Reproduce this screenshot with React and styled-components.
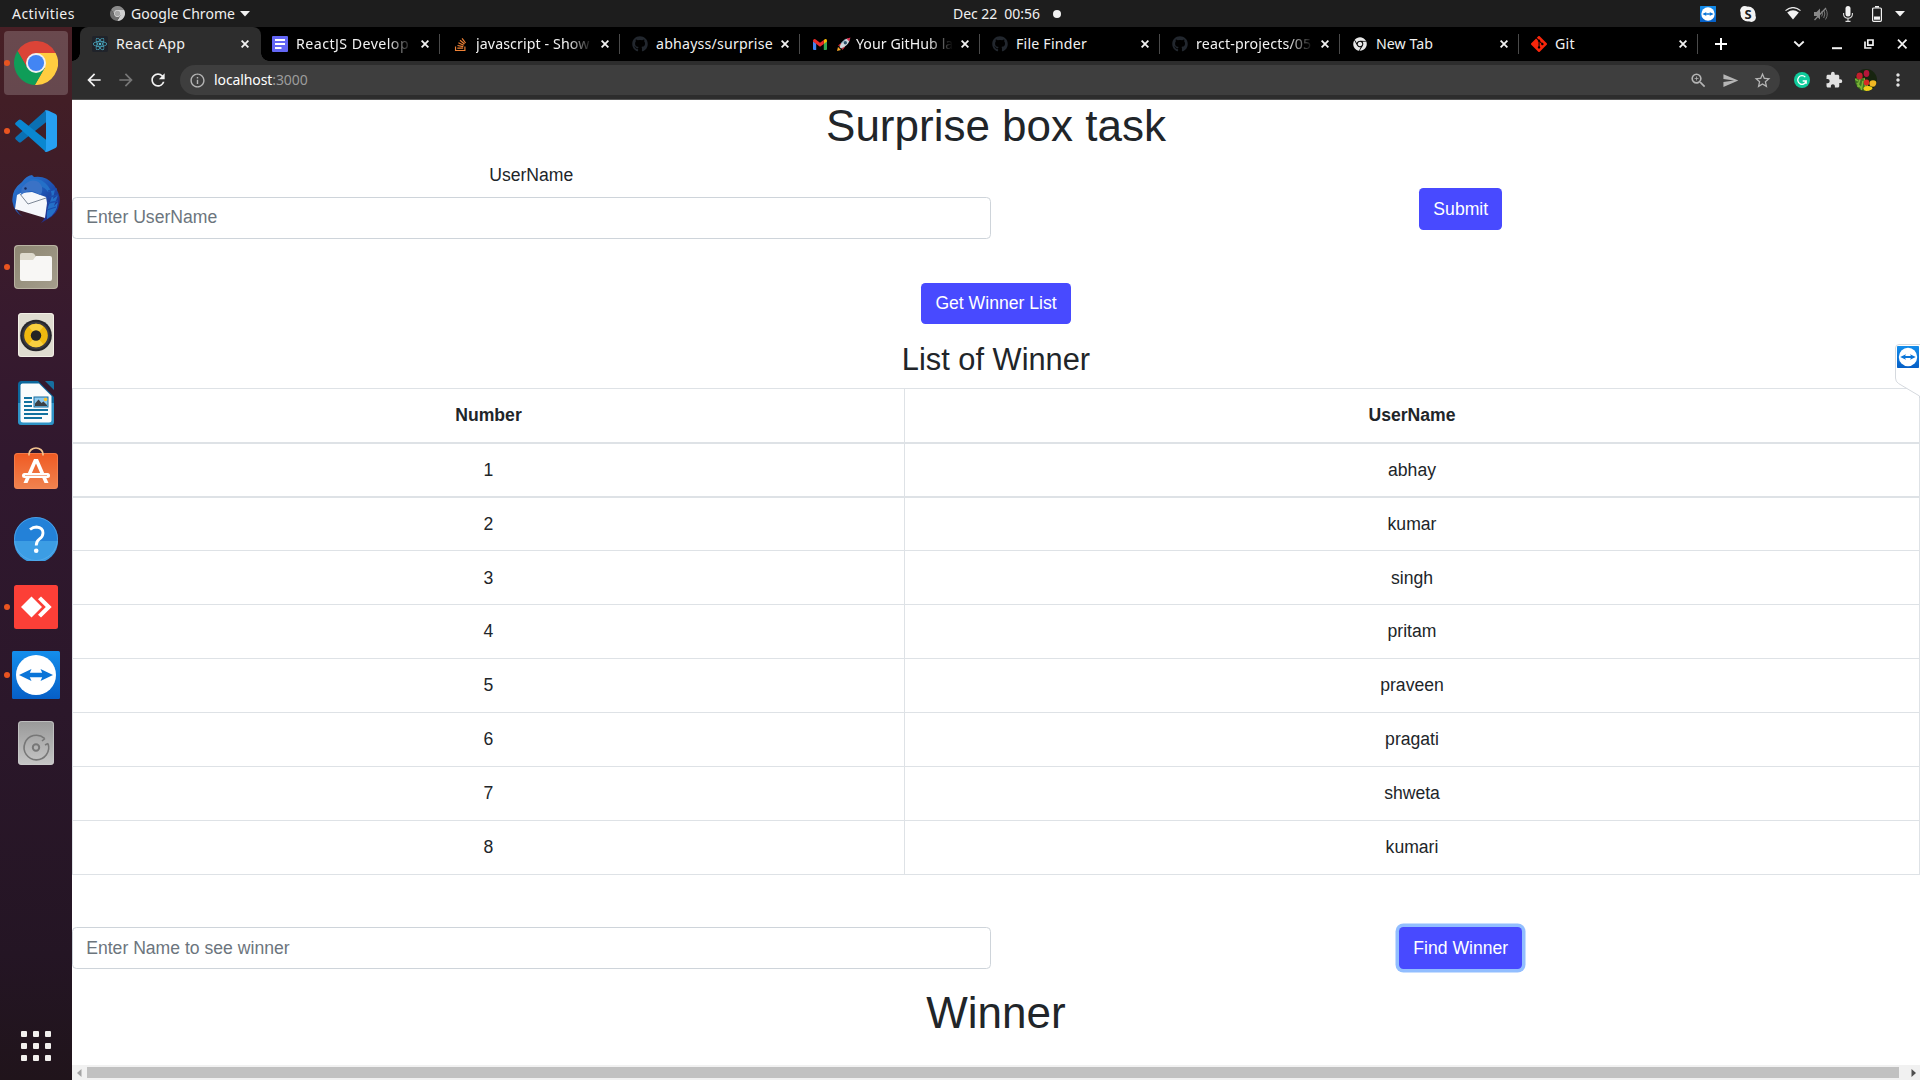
import React from 'react';
import styled, { createGlobalStyle } from 'styled-components';
import { FaReact, FaGithub, FaStackOverflow, FaChrome } from 'react-icons/fa';
import { SiGit } from 'react-icons/si';
import {
  MdArrowBack, MdArrowForward, MdRefresh, MdInfoOutline, MdZoomIn, MdSend, MdStarBorder,
  MdExtension, MdMoreVert,
} from 'react-icons/md';

const GlobalStyle = createGlobalStyle`
  * { box-sizing: border-box; }
  body { margin: 0; background: #fff; overflow: hidden; }
  svg { display: block; flex: none; }
`;

const shellFont = `'Noto Sans', 'Open Sans', sans-serif`;
const pageFont = `'Liberation Sans', Arial, sans-serif`;

const Desktop = styled.div`
  width: 1920px;
  height: 1080px;
  display: flex;
  flex-direction: column;
  overflow: hidden;
`;

/* ---------- system bar ---------- */
const SystemBar = styled.header`
  height: 27px;
  background: #1d1d1d;
  color: #f0f0f0;
  display: grid;
  grid-template-columns: 953px 1fr auto;
  align-items: center;
  font: 14px/27px ${shellFont};
  white-space: pre;
`;
const SystemLeft = styled.div`
  display: flex;
  align-items: center;
  padding-left: 12px;
`;
const Activities = styled.span`
  width: 98px;
  letter-spacing: 0.45px;
`;
const AppMenu = styled.span`
  margin: 0 5px 0 6px;
  letter-spacing: 0.05px;
`;
const Clock = styled.div`
  display: flex;
  align-items: center;
  gap: 13px;
  line-height: 25px;
  letter-spacing: -0.05px;
`;
const NoticeDot = styled.i`
  width: 8px;
  height: 8px;
  border-radius: 50%;
  background: #f2f2f2;
`;
const Tray = styled.div`
  display: flex;
  align-items: center;
  padding-right: 15px;
  height: 26px;
`;
const TrayItem = styled.span`
  margin-left: ${p => p.$gap}px;
`;

/* ---------- dock ---------- */
const Workspace = styled.div`
  flex: 1;
  min-height: 0;
  display: grid;
  grid-template-columns: 72px 1848px;
`;
const Dock = styled.nav`
  background: linear-gradient(180deg, #481f25 0%, #421e26 7%, #371a2e 28%, #30182e 42%, #2b172a 65%, #241524 88%, #20141b 100%);
  display: flex;
  flex-direction: column;
  align-items: center;
  padding-top: 4px;
`;
const DockItem = styled.div`
  width: 64px;
  height: 64px;
  margin-bottom: 4px;
  border-radius: 4px;
  display: grid;
  place-items: center;
  position: relative;
  background: ${p => (p.$active ? 'rgba(255,255,255,.19)' : 'transparent')};
  &::before {
    content: '';
    display: ${p => (p.$running ? 'block' : 'none')};
    position: absolute;
    left: 0;
    top: 29px;
    width: 6px;
    height: 6px;
    border-radius: 50%;
    background: #e95420;
  }
`;
const AppGrid = styled.div`
  margin-top: auto;
  margin-bottom: 19px;
  display: grid;
  grid-template-columns: repeat(3, 6px);
  grid-auto-rows: 6px;
  gap: 6px;
`;
const AppGridDot = styled.i`
  background: #f2f0ee;
  border-radius: 1px;
`;

/* ---------- browser ---------- */
const Browser = styled.div`
  display: flex;
  flex-direction: column;
  min-height: 0;
`;
const TabStrip = styled.div`
  height: 34px;
  background: #000;
  display: flex;
  align-items: stretch;
  padding-left: 8px;
  font: 14.2px/34px ${shellFont};
  color: #f1f1f1;
`;
const Tab = styled.div`
  width: ${p => p.$w || 180}px;
  margin-right: ${p => (p.$active ? -1 : 0)}px;
  display: flex;
  align-items: center;
  padding: 0 ${p => (p.$active ? 7 : 6)}px 0 12px;
  background: ${p => (p.$active ? '#2d2d2d' : 'transparent')};
  border-radius: 8px 8px 0 0;
  position: relative;
  &::before, &::after {
    content: '';
    display: ${p => (p.$active ? 'block' : 'none')};
    position: absolute;
    bottom: 0;
    width: 8px;
    height: 8px;
  }
  &::before { left: -8px; background: radial-gradient(circle at 0 0, #000 7.5px, #2d2d2d 8px); }
  &::after { right: -8px; background: radial-gradient(circle at 100% 0, #000 7.5px, #2d2d2d 8px); }
`;
const Favicon = styled.span`
  width: 16px;
  height: 16px;
  display: grid;
  place-items: center;
  margin-right: 8px;
  flex: none;
`;
const TabTitle = styled.span`
  flex: 1;
  display: flex;
  align-items: center;
  gap: 5px;
  white-space: nowrap;
  letter-spacing: ${p => p.$track}px;
  -webkit-mask-image: ${p => (p.$fade ? 'linear-gradient(90deg,#000 78%,transparent 99%)' : 'none')};
`;
const TabClose = styled.span`
  width: 16px;
  height: 16px;
  display: grid;
  place-items: center;
  margin-left: 3px;
`;
const TabRule = styled.i`
  width: 1px;
  height: 20px;
  margin-left: 6px;
  margin-right: -6px;
  background: ${p => (p.$hidden ? 'transparent' : '#4a4a4a')};
`;
const WindowButtons = styled.div`
  flex: 1;
  display: flex;
  align-items: center;
  justify-content: space-between;
  padding: 0 12px 0 17px;
`;
const WindowGroup = styled.div`
  display: flex;
  align-items: center;
`;
const WindowButton = styled.span`
  margin-left: ${p => p.$gap}px;
`;
const Toolbar = styled.div`
  height: 39px;
  background: #2d2d2d;
  border-bottom: 1px solid #555;
  display: flex;
  align-items: center;
  padding-left: 12px;
`;
const NavButtons = styled.div`
  display: flex;
  gap: 12px;
  width: 96px;
`;
const Omnibox = styled.div`
  flex: none;
  width: 1600px;
  height: 30px;
  border-radius: 15px;
  background: #3e3e3e;
  display: flex;
  align-items: center;
  padding: 0 8px 0 9px;
  font: 14px/30px ${shellFont};
  color: #9c9c9c;
`;
const Url = styled.span`
  flex: 1;
  margin-left: 8px;
  letter-spacing: -0.1px;
  b { font-weight: 400; color: #fff; }
`;
const OmniActions = styled.div`
  display: grid;
  grid-template-columns: repeat(3, 32px);
  place-items: center;
  margin-right: -6px;
`;
const Extensions = styled.div`
  flex: none;
  display: grid;
  grid-template-columns: repeat(4, 32px);
  place-items: center;
  padding-left: 6px;
`;

/* ---------- page ---------- */
const Page = styled.main`
  flex: 1;
  min-height: 0;
  background: #fff;
  color: #212529;
  font: 17.6px/26.4px ${pageFont};
  text-align: center;
  position: relative;
  overflow: hidden;
`;
const Heading = styled.h1`
  margin: 0 0 8.8px;
  font-size: 44px;
  line-height: 52.8px;
  font-weight: 500;
`;
const SubHeading = styled.h3`
  margin: 16.6px 0 9.8px;
  font-size: 30.8px;
  line-height: 37px;
  font-weight: 500;
`;
const FormRow = styled.div`
  display: grid;
  grid-template-columns: 1fr 1fr;
  column-gap: 11px;
  align-items: center;
`;
const FormAction = styled.div`
  padding-top: ${p => p.$drop || 0}px;
`;
const Label = styled.label`
  display: block;
  margin-bottom: 8.8px;
`;
const Input = styled.input`
  display: block;
  width: 100%;
  height: 41.8px;
  padding: 6.6px 13.2px;
  border: 1px solid #ced4da;
  border-radius: 4.4px;
  font: 17.6px/26.4px ${pageFont};
  &::placeholder { color: #6c757d; opacity: 1; }
`;
const Button = styled.button`
  display: inline-block;
  vertical-align: top;
  height: 41.8px;
  padding: 0 14.3px;
  border: 0;
  border-radius: 4.4px;
  background: #484aff;
  color: #fff;
  font: 17.6px/26.4px ${pageFont};
  box-shadow: ${p => (p.$focused ? '0 0 0 3.5px #92beff' : 'none')};
`;
const WinnerAction = styled.div`
  margin-top: 44px;
  height: 41.8px;
`;
const Table = styled.div`
  border: 1px solid #dee2e6;
  margin-bottom: 52.6px;
`;
const Row = styled.div`
  display: grid;
  grid-template-columns: 831px 1fr;
  height: ${p => p.$h}px;
  line-height: ${p => p.$line}px;
  border-bottom: ${p => p.$rule}px solid #dee2e6;
  font-weight: ${p => (p.$head ? 700 : 400)};
`;
const Cell = styled.div`
  & + & { border-left: 1px solid #dee2e6; }
`;
const Bottom = styled.div`
  margin-bottom: 17.6px;
`;
const SideHandle = styled.div`
  position: absolute;
  right: 0;
  top: 244px;
`;
const Scrollbar = styled.div`
  height: 15px;
  background: #f1f1f1;
  display: flex;
  align-items: center;
  padding: 0 4px 0 5px;
`;
const Thumb = styled.div`
  width: 1812px;
  height: 11px;
  margin: 0 12px 0 5px;
  background: #c1c1c1;
`;

/* ---------- drawings ---------- */
const Cross = () => (
  <svg width="8" height="8" viewBox="0 0 8 8"><path d="M.6.6 7.4 7.4M7.4.6.6 7.4" stroke="#f2f2f2" strokeWidth="1.8" /></svg>
);

const ChromeLogo = ({ size, mono }) => {
  const c = mono ? ['#8a8a8a', '#d0d0d0', '#6d6d6d', '#a5a5a5', '#ddd'] : ['#db4437', '#ffcd40', '#0f9d58', '#4285f4', '#f1f1f1'];
  return (
    <svg width={size} height={size} viewBox="2 2 44 44">
      <path d="M5.54 12.03A22 22 0 0 1 43.6 14H24L15.34 29Z" fill={c[0]} />
      <path d="M43.6 14A22 22 0 0 1 22.86 45.97L32.66 29 24 14Z" fill={c[1]} />
      <path d="M22.86 45.97A22 22 0 0 1 5.54 12.03L15.34 29H32.66Z" fill={c[2]} />
      <circle cx="24" cy="24" r="10" fill={c[4]} />
      <circle cx="24" cy="24" r="8.1" fill={c[3]} />
    </svg>
  );
};

const TeamViewer = ({ size }) => (
  <svg width={size} height={size} viewBox="0 0 48 48">
    <defs><linearGradient id={`tv${size}`} x1="0" y1="0" x2="0" y2="1"><stop stopColor="#148eec" /><stop offset="1" stopColor="#065fc6" /></linearGradient></defs>
    <rect width="48" height="48" rx="1.5" fill={`url(#tv${size})`} />
    <circle cx="24" cy="24" r="20" fill="#fff" />
    <path d="M7 24 19.5 18 17.8 21.8H30.2L28.5 18 41 24 28.5 30 30.2 26.2H17.8L19.5 30Z" fill="#0b75d8" />
  </svg>
);

const VsCode = () => (
  <svg width="42" height="42" viewBox="0 0 42 42">
    <path d="M31 0 .8 27Q-.5 28.3.8 29.5L3.6 32Q4.800 33 6.200 32L31 12.200Z" fill="#0b70b3" />
    <path d="M31 42 .8 15Q-.5 13.700.8 12.500L3.600 10Q4.800 9 6.200 10L31 29.800Z" fill="#0a87d1" />
    <path d="M31 .2Q32 0 33 .4L40.500 4Q42 4.800 42 6.500V35.500Q42 37.200 40.500 38L33 41.600Q31 42.400 29.500 41 31 41.500 31 39V3Q31 .5 29.500 1Z" fill="#26a0f2" />
  </svg>
);

const Thunderbird = () => (
  <svg width="48" height="48" viewBox="0 0 48 48">
    <defs><linearGradient id="tb" x1="0" y1="0" x2="1" y2="1"><stop stopColor="#2f7fd6" /><stop offset=".5" stopColor="#1d54b4" /><stop offset="1" stopColor="#251a72" /></linearGradient></defs>
    <path d="M10 7Q14 1 20 0L22 2Q34 0 42 10 49 20 47.500 28 46 40 34 45L29 48Q33 44 33 39L4 34Q7 39 11 42 2 37 .5 27-1 15 10 7Z" fill="url(#tb)" />
    <path d="M10 18Q10 8 19 4 29 2 36 11 42 18 38 27 34 35 35 44 45 39 46 27L42 31 46 20 41 24 43 14 36 17Q32 11 26 12Z" fill="#2470c8" />
    <path d="M5 20 9 18 20 17 34 22 35 28 33 43 3 34Z" fill="#f5f7fb" />
    <path d="M8 19 16 29 34 23" fill="none" stroke="#7c8796" strokeWidth="1" />
    <path d="M9 20Q8 10 18 6 27 4 30 12 31 18 28 20 24 17 20 16 14 16 9 20Z" fill="#3a72c6" />
    <path d="M36 16 45 14M37 22 46 20M36 28 46 26M35 35 44 32" stroke="#1b4fae" strokeWidth="1.3" />
    <circle cx="13.500" cy="13.500" r="1.200" fill="#152b60" />
  </svg>
);

const Files = () => (
  <svg width="44" height="44" viewBox="0 0 44 44">
    <defs><linearGradient id="fl" x1="0" y1="0" x2="1" y2="1"><stop stopColor="#8d8672" /><stop offset="1" stopColor="#a49d8c" /></linearGradient></defs>
    <rect width="44" height="44" rx="4" fill="#b9b3a2" />
    <rect x="1" y="1" width="42" height="42" rx="3.500" fill="url(#fl)" />
    <path d="M6 10Q6 8 8 8H18Q20 8 21 10L22 12H30V20H6Z" fill="#dedacd" />
    <path d="M6 15H19L22 11H36Q38 11 38 13V34Q38 36 36 36H8Q6 36 6 34Z" fill="#f8f7f5" />
  </svg>
);

const Rhythmbox = () => (
  <svg width="36" height="44" viewBox="0 0 36 44">
    <rect width="36" height="44" rx="3.500" fill="#dfdcd0" />
    <rect x=".5" y=".5" width="35" height="43" rx="3" fill="none" stroke="#f2efe6" />
    <circle cx="18" cy="22.500" r="15.800" fill="#26262b" />
    <circle cx="18" cy="22.500" r="13.800" fill="#3a3a40" />
    <circle cx="18" cy="22.500" r="11.800" fill="#f0b90f" />
    <path d="M18 22.500 10.500 13.500A11.800 11.800 0 0 1 25.500 13.500Z" fill="#f8d040" />
    <path d="M18 22.500 10.500 31.500A11.800 11.800 0 0 0 25.500 31.500Z" fill="#f8d040" />
    <circle cx="18" cy="22.500" r="5.200" fill="#242424" />
  </svg>
);

const Writer = () => (
  <svg width="36" height="44" viewBox="0 0 36 44">
    <path d="M3.500 0H20L36 16V40.500Q36 44 32.500 44H3.500Q0 44 0 40.500V3.500Q0 0 3.500 0Z" fill="#0c679c" />
    <path d="M0 22H36V40.500Q36 44 32.500 44H3.500Q0 44 0 40.500Z" fill="#2f93c6" />
    <path d="M27 0H34.500Q36 0 36 1.500V9Z" fill="#176f9f" />
    <path d="M4.500 2.500H21L33.500 15V39Q33.500 41.500 31 41.500H5Q2.500 41.500 2.500 39V4.500Q2.500 2.500 4.500 2.500Z" fill="#fafbfc" />
    <path d="M6 17H14M6 21H14M6 25H14M6 29H30M6 33H30M6 37H24" stroke="#12719f" strokeWidth="1.900" />
    <rect x="16" y="16" width="14" height="10" fill="#8cc8ee" stroke="#176f9f" strokeWidth="1" />
    <circle cx="27.500" cy="18.500" r="1.800" fill="#f7c12d" />
    <path d="M17 25V22.500L20.500 18.500 23.500 22 25.500 20.500 29 24V25Z" fill="#3b4045" />
  </svg>
);

const Software = () => (
  <svg width="44" height="48" viewBox="0 2 44 48">
    <defs><linearGradient id="sw" x1="0" y1="0" x2="0" y2="1"><stop stopColor="#f05a22" /><stop offset="1" stopColor="#f08350" /></linearGradient></defs>
    <rect y="8" width="44" height="36" rx="3.500" fill="url(#sw)" />
    <rect x=".5" y="8.500" width="43" height="35" rx="3" fill="none" stroke="#f58b5c" strokeOpacity=".6" />
    <path d="M15 10.500V9A7 6 0 0 1 29 9V10.500" fill="none" stroke="#f3c48e" strokeWidth="1.700" />
    <path d="M20 14H24L34.500 38H30.500L22 18.500 13.500 38H9.500Z" fill="#fff" />
    <rect x="8" y="28" width="28" height="5" rx="2.500" fill="#fff" />
    <path d="M11 30.500H33" stroke="#f3a481" strokeWidth=".9" />
  </svg>
);

const Help = () => (
  <svg width="44" height="44" viewBox="0 0 44 44">
    <circle cx="22" cy="22" r="22" fill="#2381d8" />
    <path d="M0 24H44A22 22 0 0 1 0 24Z" fill="#3c9de4" />
    <circle cx="22" cy="22" r="21.500" fill="none" stroke="#62b3ee" strokeOpacity=".6" />
    <path d="M16 12.500Q19 10 22.500 10 29 10.500 29 16 29 19.500 25.300 22.200 22.300 24.300 22.200 28.500" fill="none" stroke="#fff" strokeWidth="2.800" />
    <circle cx="22.200" cy="33.800" r="2.300" fill="#fff" />
  </svg>
);

const AnyDesk = () => (
  <svg width="44" height="44" viewBox="0 0 44 44">
    <rect width="44" height="44" rx="2.500" fill="#fc3f37" />
    <path d="M7 22 17.500 11.500 28 22 17.500 32.500Z" fill="#fff" />
    <path d="M24 14.200 27 11.500 37.700 22 27 32.500 24 29.800 31.800 22Z" fill="#fff" />
  </svg>
);

const Disk = () => (
  <svg width="36" height="44" viewBox="0 0 36 44">
    <defs><linearGradient id="dk" x1="0" y1="0" x2="0" y2="1"><stop stopColor="#999" /><stop offset="1" stopColor="#c6c6c6" /></linearGradient></defs>
    <rect width="36" height="44" rx="3.500" fill="url(#dk)" />
    <rect x=".5" y=".5" width="35" height="43" rx="3" fill="none" stroke="#ccc" strokeOpacity=".7" />
    <path d="M26.500 17.300A12.300 12.300 0 1 0 30 22.500M27 17.500 24 20M30 22.500 27 24" fill="none" stroke="#777" strokeWidth="1.600" />
    <circle cx="18" cy="26.500" r="3.200" fill="none" stroke="#777" strokeWidth="2" />
  </svg>
);

const DocIcon = () => (
  <svg width="16" height="16" viewBox="0 0 16 16"><rect width="16" height="16" rx="1" fill="#6366f5" /><path d="M3 4H13M3 8H13M3 12H9.500" stroke="#fff" strokeWidth="2" /></svg>
);
const ReactIcon = () => (
  <svg width="16" height="16" viewBox="0 0 16 16"><rect width="16" height="16" rx="1.500" fill="#20232a" /><FaReact x="1" y="1" size={14} color="#4fb9d3" /></svg>
);
const Gmail = () => (
  <svg width="14" height="11" viewBox="0 0 14 11">
    <path d="M0 2V10Q0 11 1 11H3.200V4.500Z" fill="#4285f4" />
    <path d="M14 2V10Q14 11 13 11H10.800V4.500Z" fill="#34a853" />
    <path d="M10.800 1.500V5L14 2.600V1.500Q13.500-.6 11.600.3Z" fill="#fbbc04" />
    <path d="M0 1.600Q.5-.6 2.400.3L7 3.700 10.800.9V5L7 7.700 0 2.600Z" fill="#ea2b2b" />
  </svg>
);
const Rocket = () => (
  <svg width="15" height="15" viewBox="0 0 15 15">
    <path d="M1 14 2 10 5 13Z" fill="#f9a825" />
    <path d="M2 8.500 5 6H8L5 10ZM6.500 13 9 10V7L5 10Z" fill="#c62835" />
    <path d="M3.500 10Q6 3 11.500 1.500L13.500 3.500Q12 9 5 11.500Z" fill="#cfd8dc" />
    <path d="M10.500 1.800 14.500.5 13.200 4.500Z" fill="#d9304f" />
    <circle cx="9.300" cy="5.700" r="1.700" fill="#31536b" />
    <path d="M5 6.500 9.500 2.300" stroke="#8fb2c6" strokeWidth="1" />
  </svg>
);

const SkypeText = styled.text`
  font: 700 13px 'Noto Sans', sans-serif;
`;
const Skype = () => (
  <svg width="16" height="16" viewBox="0 0 16 16">
    <circle cx="8" cy="8" r="7.500" fill="#f2f2f2" /><circle cx="4.600" cy="4.600" r="4.500" fill="#f2f2f2" /><circle cx="11.400" cy="11.400" r="4.500" fill="#f2f2f2" />
    <SkypeText x="8" y="12.600" textAnchor="middle" fill="#1d1d1d">S</SkypeText>
  </svg>
);
const Wifi = () => (
  <svg width="16" height="13" viewBox="0 0 16 13"><path d="M.5 3.600Q8-2.500 15.500 3.600" fill="none" stroke="#e6e6e6" strokeWidth="1.200" /><path d="M2.200 5.400Q8 1 13.800 5.400L8 12.500Z" fill="#f2f2f2" /></svg>
);
const Muted = () => (
  <svg width="15" height="14" viewBox="0 0 15 14"><path d="M1 5H3.500L7 1.500V12.500L3.500 9H1Z" fill="#888" /><path d="M8.700 4.500Q10.200 7 8.700 9.500M10.700 3Q13 7 10.700 11M12.500 1.500Q16 7 12.500 12.500" fill="none" stroke="#777" strokeWidth="1" /><path d="M1.500 13 13 1" stroke="#888" strokeWidth="1.200" /></svg>
);
const Mic = () => (
  <svg width="10" height="16" viewBox="0 0 10 16"><rect x="2.500" y="0" width="5" height="10.500" rx="2.500" fill="#f2f2f2" /><path d="M.6 7V8.500Q.8 12 5 12.300 9.200 12 9.400 8.500V7M5 12.300V15.300M2.500 15.400H7.500" fill="none" stroke="#dcdcdc" strokeWidth="1.100" /></svg>
);
const Battery = () => (
  <svg width="10" height="16" viewBox="0 0 10 16"><rect x=".6" y="2" width="8.800" height="13.300" rx="1" fill="none" stroke="#f2f2f2" strokeWidth="1.200" /><path d="M3 .8H7" stroke="#f2f2f2" strokeWidth="1.600" /><rect x="2" y="10.500" width="6" height="3.200" fill="#f2f2f2" /></svg>
);
const Caret = () => (
  <svg width="10" height="6" viewBox="0 0 10 6"><path d="M0 0H10L5 5.500Z" fill="#f2f2f2" /></svg>
);
const Grammarly = () => (
  <svg width="16" height="16" viewBox="0 0 16 16"><circle cx="8" cy="8" r="8" fill="#0fcb9b" /><path d="M11.300 5.200A4.300 4.300 0 1 0 12.200 9H8.700M12.200 9V11.700" fill="none" stroke="#fff" strokeWidth="1.300" /></svg>
);
const Avatar = () => (
  <svg width="22" height="22" viewBox="0 0 22 22">
    <defs><clipPath id="av"><circle cx="11" cy="11" r="11" /></clipPath></defs>
    <g clipPath="url(#av)">
      <rect width="22" height="22" fill="#17240f" />
      <path d="M0 9H8L13 22H0Z" fill="#3f7420" />
      <path d="M2 20 5 10M6 22 8 12M11 20 9 9M3 12 0 10M14 22 12 16M7 20 2 14" stroke="#79b437" strokeWidth="1.500" />
      <ellipse cx="4.500" cy="7" rx="3.200" ry="3.400" fill="#c21f2e" />
      <ellipse cx="11.500" cy="4.500" rx="2.800" ry="3.400" fill="#b3163a" />
      <ellipse cx="11.500" cy="13.500" rx="2.800" ry="3" fill="#d92a24" />
      <ellipse cx="18" cy="14.500" rx="3.500" ry="3.200" fill="#f1b824" />
      <ellipse cx="13" cy="19.500" rx="4.500" ry="2.600" fill="#f3cf18" />
    </g>
  </svg>
);
const HandleShape = () => (
  <svg width="25" height="54" viewBox="0 0 25 54">
    <path d="M25 .5H4Q.5.500.5 4V34Q.5 37.500 3.500 39.500L24.500 52V54H25Z" fill="#fff" />
    <path d="M25 .5H4Q.5.500.5 4V34Q.5 37.500 3.500 39.500L24.500 52V54" fill="none" stroke="#d5d9de" />
    <g transform="translate(2 2)"><TeamViewer size={22} /></g>
  </svg>
);

const tabs = [
  { title: 'React App', icon: <ReactIcon />, active: true, noRule: true, w: 181, track: 0.25 },
  { title: 'ReactJS Develop', icon: <DocIcon />, fade: true, track: 0.45 },
  { title: 'javascript - Show', icon: <FaStackOverflow size={15} color="#ef8236" />, fade: true, track: 0.1 },
  { title: 'abhayss/surprise', icon: <FaGithub size={16} color="#22272e" />, track: 0.18 },
  { title: 'Your GitHub la', icon: <Gmail />, lead: <Rocket />, fade: true, track: 0.05 },
  { title: 'File Finder', icon: <FaGithub size={16} color="#22272e" />, track: 0.2 },
  { title: 'react-projects/05', icon: <FaGithub size={16} color="#22272e" />, fade: true, track: 0.15 },
  { title: 'New Tab', icon: <FaChrome size={14} color="#e8e8e8" />, w: 179, track: 0.05 },
  { title: 'Git', icon: <SiGit size={16} color="#f9260b" />, w: 179, track: 0.2 },
];

const dock = [
  { icon: <ChromeLogo size={44} />, active: true, running: true },
  { icon: <VsCode />, running: true },
  { icon: <Thunderbird /> },
  { icon: <Files />, running: true },
  { icon: <Rhythmbox /> },
  { icon: <Writer /> },
  { icon: <Software /> },
  { icon: <Help /> },
  { icon: <AnyDesk />, running: true },
  { icon: <TeamViewer size={48} />, running: true },
  { icon: <Disk /> },
];

const winners = [
  { name: 'abhay', h: 54, line: 53, rule: 2 },
  { name: 'kumar', h: 53, line: 52, rule: 1 },
  { name: 'singh', h: 54, line: 54, rule: 1 },
  { name: 'pritam', h: 54, line: 52, rule: 1 },
  { name: 'praveen', h: 54, line: 52, rule: 1 },
  { name: 'pragati', h: 54, line: 52, rule: 1 },
  { name: 'shweta', h: 54, line: 52, rule: 1 },
  { name: 'kumari', h: 53, line: 52, rule: 0 },
];

export default function App() {
  return (
    <Desktop>
      <GlobalStyle />
      <SystemBar>
        <SystemLeft>
          <Activities>Activities</Activities>
          <ChromeLogo size={15} mono />
          <AppMenu>Google Chrome</AppMenu>
          <Caret />
        </SystemLeft>
        <Clock>
          <span>Dec 22  00:56</span>
          <NoticeDot />
        </Clock>
        <Tray>
          <TrayItem $gap={0}><TeamViewer size={16} /></TrayItem>
          <TrayItem $gap={24}><Skype /></TrayItem>
          <TrayItem $gap={29}><Wifi /></TrayItem>
          <TrayItem $gap={12}><Muted /></TrayItem>
          <TrayItem $gap={15}><Mic /></TrayItem>
          <TrayItem $gap={19}><Battery /></TrayItem>
          <TrayItem $gap={13}><Caret /></TrayItem>
        </Tray>
      </SystemBar>
      <Workspace>
        <Dock>
          {dock.map((d, i) => (
            <DockItem key={i} $active={d.active} $running={d.running}>{d.icon}</DockItem>
          ))}
          <AppGrid>
            {Array.from({ length: 9 }, (_, i) => <AppGridDot key={i} />)}
          </AppGrid>
        </Dock>
        <Browser>
          <TabStrip>
            {tabs.map(t => (
              <Tab key={t.title} $active={t.active} $w={t.w}>
                <Favicon>{t.icon}</Favicon>
                <TabTitle $fade={t.fade} $track={t.track}>{t.lead}<span>{t.title}</span></TabTitle>
                <TabClose><Cross /></TabClose>
                <TabRule $hidden={t.noRule} />
              </Tab>
            ))}
            <WindowButtons>
              <svg width="12" height="12" viewBox="0 0 12 12"><path d="M6 0V12M0 6H12" stroke="#fff" strokeWidth="2" /></svg>
              <WindowGroup>
                <WindowButton $gap={0}><svg width="12" height="8" viewBox="0 0 12 8"><path d="M1.300 1.500 6 6 10.700 1.500" fill="none" stroke="#f2f2f2" strokeWidth="1.800" /></svg></WindowButton>
                <WindowButton $gap={27}><svg width="10" height="12" viewBox="0 0 10 12"><path d="M0 10.200H10" stroke="#f2f2f2" strokeWidth="2" /></svg></WindowButton>
                <WindowButton $gap={22}><svg width="10" height="10" viewBox="0 0 10 10"><path d="M3.800 1H9V6.200H3.800ZM1 2.500V9H7.500" fill="none" stroke="#f2f2f2" strokeWidth="1.700" /></svg></WindowButton>
                <WindowButton $gap={22}><svg width="12" height="10" viewBox="0 0 12 10"><path d="M2 .7 10.500 9.300M10.500.7 2 9.300" stroke="#f2f2f2" strokeWidth="1.800" /></svg></WindowButton>
              </WindowGroup>
            </WindowButtons>
          </TabStrip>
          <Toolbar>
            <NavButtons>
              <MdArrowBack size={20} color="#f2f2f2" />
              <MdArrowForward size={20} color="#777" />
              <MdRefresh size={20} color="#f2f2f2" />
            </NavButtons>
            <Omnibox>
              <MdInfoOutline size={17} color="#b5b5b5" />
              <Url><b>localhost</b>:3000</Url>
              <OmniActions>
                <MdZoomIn size={19} color="#b5b5b5" />
                <MdSend size={17} color="#b5b5b5" />
                <MdStarBorder size={19} color="#b5b5b5" />
              </OmniActions>
            </Omnibox>
            <Extensions>
              <Grammarly />
              <MdExtension size={18} color="#e2e2e2" />
              <Avatar />
              <MdMoreVert size={20} color="#e2e2e2" />
            </Extensions>
          </Toolbar>
          <Page>
            <Heading>Surprise box task</Heading>
            <FormRow>
              <div>
                <Label>UserName</Label>
                <Input placeholder="Enter UserName" />
              </div>
              <FormAction $drop={17.6}><Button>Submit</Button></FormAction>
            </FormRow>
            <WinnerAction><Button>Get Winner List</Button></WinnerAction>
            <SubHeading>List of Winner</SubHeading>
            <Table>
              <Row $head $h={55} $line={53} $rule={2}><Cell>Number</Cell><Cell>UserName</Cell></Row>
              {winners.map((w, i) => (
                <Row key={w.name} $h={w.h} $line={w.line} $rule={w.rule}>
                  <Cell>{i + 1}</Cell>
                  <Cell>{w.name}</Cell>
                </Row>
              ))}
            </Table>
            <Bottom>
              <FormRow>
                <Input placeholder="Enter Name to see winner" />
                <FormAction><Button $focused>Find Winner</Button></FormAction>
              </FormRow>
            </Bottom>
            <Heading>Winner</Heading>
            <SideHandle><HandleShape /></SideHandle>
          </Page>
          <Scrollbar>
            <svg width="5" height="8" viewBox="0 0 5 8"><path d="M4.500 0V8L0 4Z" fill="#a3a3a3" /></svg>
            <Thumb />
            <svg width="5" height="8" viewBox="0 0 5 8"><path d="M.5 0V8L5 4Z" fill="#505050" /></svg>
          </Scrollbar>
        </Browser>
      </Workspace>
    </Desktop>
  );
}
